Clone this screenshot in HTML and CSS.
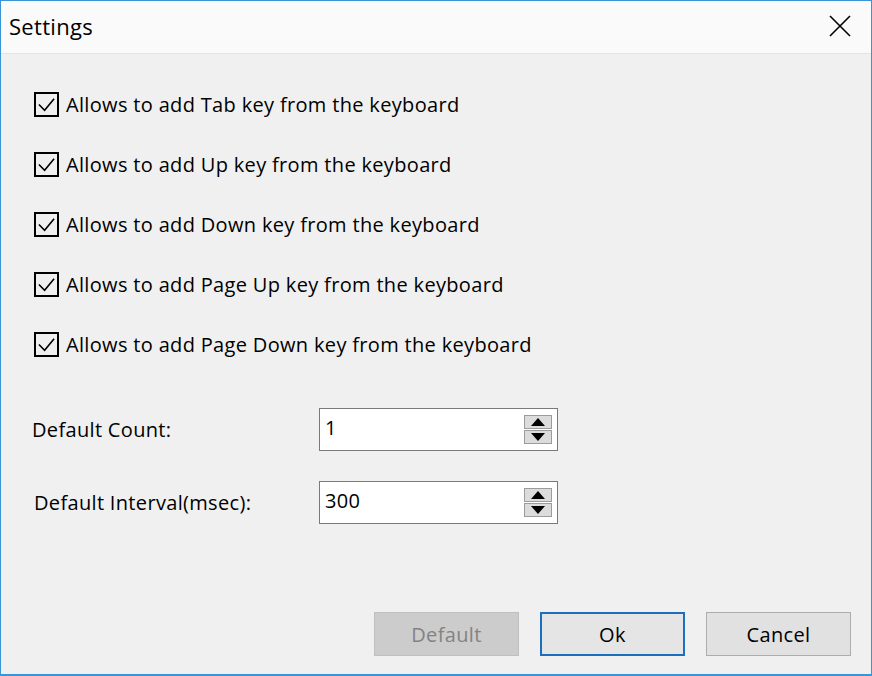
FILE: index.html
```html
<!DOCTYPE html>
<html>
<head>
    <title>Settings</title>
    <link rel="stylesheet" href="styles.css">
</head>
<body>
    <div class="window">
        <div class="title-bar">
            <span class="title">Settings</span>
            <button class="close-btn" aria-label="Close">
                <svg width="22" height="22" viewBox="0 0 22 22"><path d="M1 1 L21 21 M21 1 L1 21" stroke="#000" stroke-width="1.6" fill="none"/></svg>
            </button>
        </div>
        <div class="content">
            <div class="options">
                <label class="option"><span class="check"><svg width="20" height="20" viewBox="0 0 20 20"><path d="M2 10 L8 16 L18 4" stroke="#000" stroke-width="1.7" fill="none"/></svg></span>Allows to add Tab key from the keyboard</label>
                <label class="option"><span class="check"><svg width="20" height="20" viewBox="0 0 20 20"><path d="M2 10 L8 16 L18 4" stroke="#000" stroke-width="1.7" fill="none"/></svg></span>Allows to add Up key from the keyboard</label>
                <label class="option"><span class="check"><svg width="20" height="20" viewBox="0 0 20 20"><path d="M2 10 L8 16 L18 4" stroke="#000" stroke-width="1.7" fill="none"/></svg></span>Allows to add Down key from the keyboard</label>
                <label class="option"><span class="check"><svg width="20" height="20" viewBox="0 0 20 20"><path d="M2 10 L8 16 L18 4" stroke="#000" stroke-width="1.7" fill="none"/></svg></span>Allows to add Page Up key from the keyboard</label>
                <label class="option"><span class="check"><svg width="20" height="20" viewBox="0 0 20 20"><path d="M2 10 L8 16 L18 4" stroke="#000" stroke-width="1.7" fill="none"/></svg></span>Allows to add Page Down key from the keyboard</label>
            </div>
            <div class="fields">
                <span class="field-label">Default Count:</span>
                <div class="spin">
                    <span class="spin-value">1</span>
                    <div class="spin-btns">
                        <span class="spin-btn"><svg width="14" height="8" viewBox="0 0 14 8"><path d="M7 0 L14 8 L0 8 Z" fill="#000"/></svg></span>
                        <span class="spin-btn"><svg width="14" height="8" viewBox="0 0 14 8"><path d="M0 0 L14 0 L7 8 Z" fill="#000"/></svg></span>
                    </div>
                </div>
                <span class="field-label second">Default Interval(msec):</span>
                <div class="spin">
                    <span class="spin-value">300</span>
                    <div class="spin-btns">
                        <span class="spin-btn"><svg width="14" height="8" viewBox="0 0 14 8"><path d="M7 0 L14 8 L0 8 Z" fill="#000"/></svg></span>
                        <span class="spin-btn"><svg width="14" height="8" viewBox="0 0 14 8"><path d="M0 0 L14 0 L7 8 Z" fill="#000"/></svg></span>
                    </div>
                </div>
            </div>
            <div class="button-container">
                <button class="dlg-btn disabled">Default</button>
                <button class="dlg-btn primary">Ok</button>
                <button class="dlg-btn">Cancel</button>
            </div>
        </div>
    </div>
</body>
</html>
```

FILE: styles.css
```css
body { margin: 0; background: #f0f0f0; font-family: "Open Sans", "Noto Sans", sans-serif; color: #000; }
.window { width: 872px; height: 676px; box-sizing: border-box; border: 1px solid #3a94d8; border-bottom-width: 2px; background: #f0f0f0; display: flex; flex-direction: column; }
.title-bar { height: 52px; flex: none; background: #fafafa; display: flex; align-items: center; justify-content: space-between; padding: 0 20px 0 8px; border-bottom: 1px solid #e4e4e4; }
.title { font-size: 22px; letter-spacing: 0.3px; margin-top: -2px; }
.close-btn { background: none; border: none; padding: 0; width: 22px; height: 22px; cursor: pointer; margin-top: -2px; }
.close-btn svg { display: block; }

.content { flex: 1; display: flex; flex-direction: column; padding: 38px 20px 18px 33px; letter-spacing: 0.33px; }
.options { display: flex; flex-direction: column; gap: 35px; }
.option { display: flex; align-items: center; height: 25px; font-size: 20px; }
.check { width: 21px; height: 21px; border: 2px solid #000; display: flex; align-items: center; justify-content: center; margin-right: 7px; background: #f0f0f0; }
.check svg { display: block; width: 19px; height: 19px; }

.fields { display: grid; grid-template-columns: 285px 239px; row-gap: 30px; align-items: center; margin-top: 51px; }
.field-label { font-size: 20px; margin-left: -2px; }
.field-label.second { margin-left: 0; }
.spin { height: 43px; box-sizing: border-box; border: 1px solid #7a7a7a; background: #fff; display: flex; align-items: center; justify-content: space-between; padding: 0 5px 0 5px; }
.spin-value { font-size: 20px; margin-top: -4px; }
.spin-btns { display: flex; flex-direction: column; gap: 1px; }
.spin-btn { width: 28px; height: 14px; box-sizing: border-box; border: 1px solid #9c9c9c; background: #dcdcdc; display: flex; align-items: center; justify-content: center; }
.spin-btn svg { display: block; }

.button-container { margin-top: auto; display: flex; justify-content: flex-end; gap: 21px; }
.dlg-btn { width: 145px; height: 44px; box-sizing: border-box; border: 1px solid #adadad; background: #e1e1e1; font-family: inherit; font-size: 20px; letter-spacing: 0.35px; color: #000; padding: 0; cursor: pointer; }
.dlg-btn.disabled { background: #cccccc; border-color: #bfbfbf; color: #838383; cursor: default; }
.dlg-btn.primary { border: 2px solid #1a6fbf; background: #e5e5e5; }
```
